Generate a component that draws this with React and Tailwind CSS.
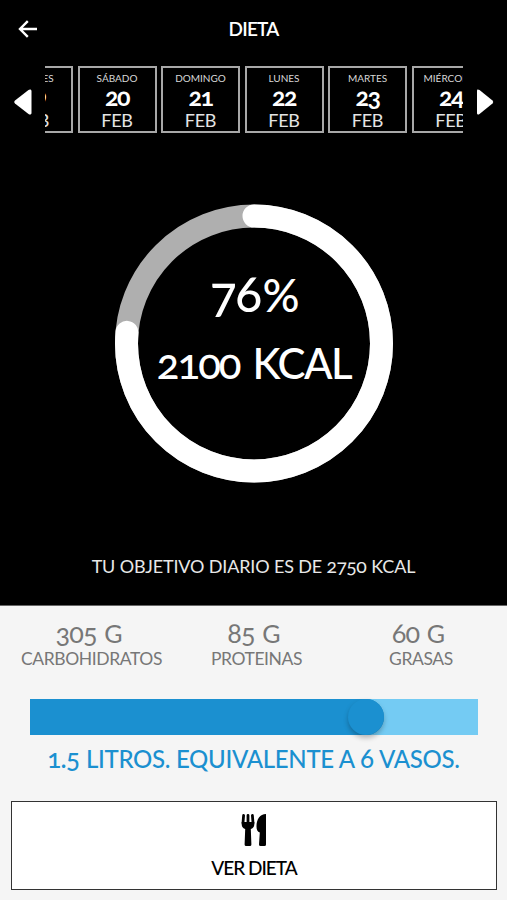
const days = [
  { name: "VIERNES", day: "19" },
  { name: "SÁBADO", day: "20" },
  { name: "DOMINGO", day: "21" },
  { name: "LUNES", day: "22" },
  { name: "MARTES", day: "23" },
  { name: "MIÉRCOLES", day: "24" },
];

const nutrients = [
  { amount: 305, label: "CARBOHIDRATOS" },
  { amount: 85, label: "PROTEINAS" },
  { amount: 60, label: "GRASAS" },
];

const goal = 2750;
const eaten = 2100;

const RADIUS = 127.5;
const LENGTH = 2 * Math.PI * RADIUS;

// old-style figures run small next to the capitals
function Num({ children }) {
  return <span className="mr-[0.04em] text-[1.08em] leading-[0] tracking-[-0.03em]">{children}</span>;
}

function DayCard({ name, day }) {
  return (
    <div className="flex h-[67px] w-[79px] shrink-0 flex-col items-center border-2 border-[#a8a8a8] pt-[3px] whitespace-nowrap text-white">
      <span className="text-[10px] leading-[14px] text-[#d8d8d8]">{name}</span>
      <span className="text-[25px] leading-[23px] font-bold tracking-[-1.5px]">{day}</span>
      <span className="text-[18px] leading-[24px] tracking-[-0.3px] text-[#e4e4e4]">FEB</span>
    </div>
  );
}

export default function App() {
  return (
    <div className="flex h-[900px] w-[507px] flex-col overflow-hidden bg-[#f5f5f5] font-['Lato',sans-serif] oldstyle-nums">
      <section className="flex h-[606px] flex-col border-b border-[#666] bg-black text-white">
        <header className="grid h-[56px] grid-cols-[60px_1fr_60px] items-center">
          <svg className="ml-[18px] h-[18px] w-[20px]" viewBox="0 0 20 18" fill="none" stroke="white" strokeWidth="2.4">
            <path d="M19 9H2M9.800 1.200L2 9l7.800 7.800" />
          </svg>
          <h1 className="pt-[1px] text-center text-[19px] leading-[56px] font-semibold tracking-[-0.8px]">DIETA</h1>
        </header>

        <div className="mt-[10px] flex h-[67px] items-center">
          <svg className="mt-[5px] ml-[14px] h-[26px] w-[18px]" viewBox="0 0 18 26" fill="white">
            <path d="M1 11.600L14.500 1C16 0 17.500 0.500 17.500 2v22c0 1.500-1.500 2-3 1L1 14.400Q-0.500 13 1 11.600z" />
          </svg>
          <div className="ml-[13px] w-[418px] overflow-hidden">
            <div className="-ml-[51px] flex gap-[4.500px]">
              {days.map((d) => (
                <DayCard key={d.day} name={d.name} day={d.day} />
              ))}
            </div>
          </div>
          <svg className="mt-[5px] ml-[13px] h-[26px] w-[18px]" viewBox="0 0 18 26" fill="white">
            <path d="M16.500 11.600L3.500 1C1.500 0 1 0.500 1 2v22c0 1.500 1 2 2.500 1L16.500 14.400Q18 13 16.500 11.600z" />
          </svg>
        </div>

        <div className="mt-[71px] ml-[114px] grid size-[280px] place-items-center">
          <svg className="col-start-1 row-start-1 size-[280px]" viewBox="0 0 280 280" fill="none" strokeWidth="23">
            <circle cx="140" cy="139.500" r={RADIUS} stroke="#afafaf" />
            <circle
              cx="140"
              cy="139.500"
              r={RADIUS}
              stroke="white"
              strokeLinecap="round"
              strokeDasharray={`${(LENGTH * eaten) / goal} ${LENGTH}`}
              transform="rotate(-90 140 139.500)"
            />
          </svg>
          <div className="col-start-1 row-start-1 flex flex-col items-center self-start pt-[60px] whitespace-nowrap">
            <span className="text-[46px] leading-[62px] font-medium tracking-[-1.500px]">
              <Num>{Math.round((eaten / goal) * 100)}</Num>%
            </span>
            <span className="mt-[6px] text-[42px] leading-[62px] font-medium tracking-[-1.500px]">
              <span className="tracking-[-2px]">{eaten}</span>
              <span className="ml-[13px]">KCAL</span>
            </span>
          </div>
        </div>

        <p className="mt-[68px] text-center text-[18px] leading-[28px] tracking-[-0.150px] text-[#e8e8e8]">
          TU OBJETIVO DIARIO ES DE <Num>{goal}</Num> KCAL
        </p>
      </section>

      <section className="grid h-[93px] grid-cols-[178px_152px_177px] pt-[11px] text-center text-[#777]">
        {nutrients.map((n) => (
          <div key={n.label}>
            <p className="text-[25px] leading-[32px]">
              <Num>{n.amount}</Num> G
            </p>
            <p className="pl-[5px] text-[17.500px] leading-[20px] tracking-[-0.400px]">{n.label}</p>
          </div>
        ))}
      </section>

      <div className="mr-[29px] ml-[30px] flex h-[36px] bg-[#74cbf3]">
        <div className="flex w-[354px] justify-end rounded-r-full bg-[#1b90d0]">
          <div className="size-[36px] rounded-full bg-[#1b90d0] shadow-[0_3px_5px_rgba(0,0,0,0.25)]" />
        </div>
      </div>
      <p className="mt-[7px] text-center text-[24px] leading-[34px] font-medium tracking-[-0.300px] text-[#1b90d0]">
        <Num>1.5</Num> LITROS. EQUIVALENTE A <Num>6</Num> VASOS.
      </p>

      <button className="mt-[25px] mr-[10px] ml-[11px] flex h-[89px] flex-col items-center border-[1.500px] border-[#333] bg-white pt-[12px] text-black">
        <svg className="h-[32px] w-[26px]" viewBox="0 0 26 32">
          <path
            d="M2.600 1.500L2 9M7 1.500V9M11.400 1.500L12 9"
            stroke="black"
            strokeWidth="2.800"
            strokeLinecap="round"
          />
          <path d="M0.700 8h12.600v2.500c0 2.500-1.800 4-3.500 4.500l0.600 15.500q0 1.500-1.500 1.500H5.100q-1.500 0-1.500-1.500L4.200 15C2.500 14.500 0.700 13 0.700 10.500z" />
          <path d="M25 0v30.500q0 1.500-1.500 1.500h-4q-1.500 0-1.500-1.500l0.800-12C16.500 17.500 15.500 16 15.500 12.500 15.500 5 19 0 25 0z" />
        </svg>
        <span className="mt-[8px] text-[19px] leading-[28px] font-medium tracking-[-1px]">VER DIETA</span>
      </button>
    </div>
  );
}
